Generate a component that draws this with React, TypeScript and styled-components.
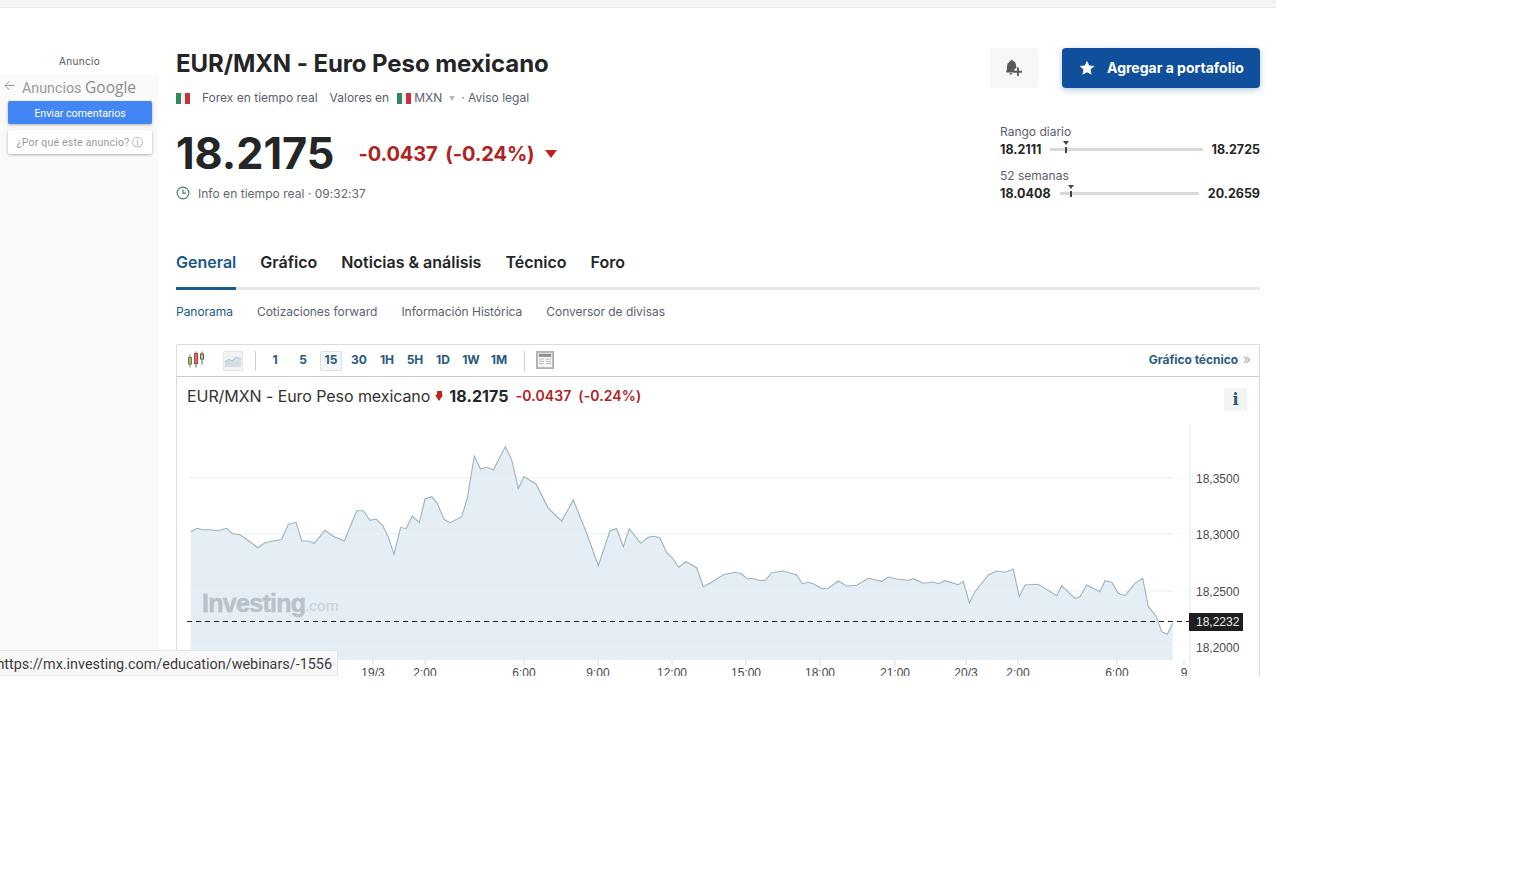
import React from "react";
import styled, { createGlobalStyle } from "styled-components";

const GlobalStyle = createGlobalStyle`
html, body {
    margin: 0;
    padding: 0;
    background: #fff;
    font-family: "Inter", "Liberation Sans", sans-serif;
    color: #232526;
}
`;

const chartPoints = "190.7,531.7 196.7,528.3 203,529.7 210,529.7 218,530.7 226.7,528.3 232.7,533.7 240,534.7 250,541.7 257.7,547.7 265,542.7 273.3,541 281.7,539.3 288.3,524.3 296,522.3 301.7,541 308.3,541 314.3,543.3 325,530.3 333.3,536.3 344.3,541 356.7,510.7 363.3,510.7 370,520.3 376,519 382.7,525.3 388.3,537.3 394,554.3 400.7,527.3 406,528.7 412.3,516 419.3,522.7 425,499 431.7,496.7 437.3,503.3 444,519.3 450,522.7 461.7,516.7 467.3,498.3 474.3,456 480.7,469.3 486.7,467 493.3,470 505.3,446.7 511.7,460 518.3,488.3 524,476.7 536,484 548.3,508.3 561.7,521 573.3,500 586.7,533.3 598.3,565.7 610,530.7 616.7,528.7 623.3,546.7 629.3,528.7 640.7,543.3 648.3,537.3 655,536.3 660,538.3 666.7,552.7 672.7,558.3 678.7,567.3 686,561.7 696.7,567.7 703.3,586.7 711.7,582.3 723.3,574.7 735,572.3 741.7,574 746.7,578.3 753.3,578.7 761.7,580.7 765.7,580 771.7,572.7 783.3,571 796.7,575 802.3,583.7 808.3,582.3 813.3,583.7 821.7,588.7 828.3,588.3 838.3,581 846.7,586 856.7,585.3 868.3,578.3 881.7,581.3 888.3,577 896.7,579 908.3,580.3 913.3,578.7 923.3,583.3 933.3,582 938.3,583.7 945,580.7 958.3,584.7 963.3,581.3 969.3,602.7 975,591.7 988.3,575 996.7,571 1005,572.3 1013.3,569.3 1019.3,596.7 1025,585 1038.3,584.3 1056.7,595.7 1061.7,585.7 1075,598.3 1080,596.7 1086.7,585 1100,591.7 1105,580.7 1111.7,582.3 1118.3,593.3 1125,595.7 1135,583.3 1142.7,578.3 1148.3,606.7 1156,616 1161.7,631.7 1167.3,634.3 1172.7,623.3";

const timeLabels = [
    { x: 373, label: "19/3" },
    { x: 425, label: "2:00" },
    { x: 524, label: "6:00" },
    { x: 598, label: "9:00" },
    { x: 672, label: "12:00" },
    { x: 746, label: "15:00" },
    { x: 820, label: "18:00" },
    { x: 895, label: "21:00" },
    { x: 966, label: "20/3" },
    { x: 1018, label: "2:00" },
    { x: 1117, label: "6:00" },
    { x: 1184, label: "9" },
];

const priceLabels = [
    { y: 478, label: "18,3500" },
    { y: 534, label: "18,3000" },
    { y: 591, label: "18,2500" },
    { y: 647, label: "18,2000" },
];

const periods = ["1", "5", "15", "30", "1H", "5H", "1D", "1W", "1M"];

function Flag() {
    return (
        <svg width="14" height="11" viewBox="0 0 14 11">
            <rect width="5" height="11" fill="#2f8a5f" />
            <rect x="5" width="4" height="11" fill="#f4eeee" />
            <rect x="9" width="5" height="11" fill="#c8323f" />
        </svg>
    );
}

function BackArrow() {
    return (
        <svg width="11" height="11" viewBox="0 0 11 11" fill="none" stroke="#9a9a9a" strokeWidth="1">
            <path d="M10.5 5.5H1M5.5 1L1 5.5 5.5 10" />
        </svg>
    );
}

function ClockIcon() {
    return (
        <svg width="14" height="14" viewBox="0 0 14 14" fill="none" stroke="#4d7a70" strokeWidth="1.2">
            <circle cx="7" cy="7" r="5.8" />
            <path d="M7 3.6V7.2H10" />
        </svg>
    );
}

function BellPlusIcon() {
    return (
        <svg width="18" height="18" viewBox="0 0 18 18" fill="#5a5a5a">
            <path d="M5.8.8c.9-.2 1.6.3 1.9 1 1.8.3 2.8 1.6 3.1 3.3.2 1.4.3 2.7.8 3.6l-2.2 1.6v3.2H1.2c-.4-.8.3-1.5.6-2.5.4-1.2.2-2.7.3-4.2.1-1.7.9-3 2.2-3.8 0-.6.6-1.1 1.5-1.2z" />
            <path d="M4.2 14.3h3.4c-.2.9-.9 1.4-1.7 1.4s-1.5-.5-1.7-1.4z" />
            <path d="M12 8.6h1.9v3.2H17v1.9h-3.1v3.2H12v-3.2H8.9v-1.9H12z" />
        </svg>
    );
}

function StarIcon() {
    return (
        <svg width="16" height="16" viewBox="0 0 16 16" fill="#fff">
            <path d="M8 .7l2.2 4.8 5.2.6-3.9 3.5 1.1 5.2L8 12.2l-4.6 2.6 1.1-5.2L.6 6.1l5.2-.6z" />
        </svg>
    );
}

function CandlesIcon() {
    return (
        <svg width="18" height="17" viewBox="0 0 18 17" fill="none" strokeWidth="1">
            <path d="M3 3.5v13" stroke="#5a8a5a" />
            <rect x="1.5" y="6.5" width="3" height="6.5" fill="#e0a070" stroke="#5a8a5a" />
            <path d="M9 .5v16" stroke="#555" />
            <rect x="7.5" y="2.5" width="3" height="10" fill="#e0687a" stroke="#a8463f" />
            <path d="M15 .5v13" stroke="#4f6f4f" />
            <rect x="13.5" y="3" width="3" height="5" fill="#e6c090" stroke="#6a5a3a" />
        </svg>
    );
}

function AreaIcon() {
    return (
        <svg width="16" height="12" viewBox="0 0 16 12">
            <path d="M0 7l4-3 3 2 4-4 5 2v8H0z" fill="#d4dde5" />
            <path d="M0 7l4-3 3 2 4-4 5 2" fill="none" stroke="#b4c0cb" />
        </svg>
    );
}

function TableIcon() {
    return (
        <svg width="18" height="18" viewBox="0 0 20 20" fill="none">
            <rect x="1" y="1" width="18" height="18" fill="#f6f6f6" stroke="#b0b0b0" strokeWidth="2" />
            <rect x="3" y="3" width="14" height="3.5" fill="#8e8e8e" />
            <path d="M3 9h6M3 11.5h6M3 14h6M11 9h6M11 11.5h6M11 14h6" stroke="#b8b8b8" />
        </svg>
    );
}

function PriceChart() {
    const top = 424;
    const bottom = 676;
    return (
        <ChartSvg viewBox={`177 ${top} 1082 ${bottom - top}`}>
            {priceLabels.map((p) => (
                <line key={p.y} x1="190" x2="1190" y1={p.y} y2={p.y} stroke="#f8f9f9" />
            ))}
            <polygon points={`190.7,660 ${chartPoints} 1172.7,660`} fill="#e5eef5" />
            {priceLabels.map((p) => (
                <line key={p.y} x1="190" x2="1172" y1={p.y} y2={p.y} stroke="#e9f1f6" />
            ))}
            <polyline points={chartPoints} fill="none" stroke="#9bb3bf" strokeWidth="1.1" />
            <AxisLine x1="1190" x2="1190" y1="424" y2="676" />
            <line x1="187" x2="1189" y1="621.5" y2="621.5" stroke="#222" strokeDasharray="5 4" />
            <Watermark x="202" y="612">Investing</Watermark>
            <WatermarkSuffix x="305" y="611">.com</WatermarkSuffix>
            {timeLabels.map((t) => (
                <g key={t.label + t.x}>
                    <line x1={t.x} x2={t.x} y1="660" y2="665" stroke="#d8dbdd" />
                    <AxisText x={t.x} y="677" textAnchor="middle">{t.label}</AxisText>
                </g>
            ))}
            {priceLabels.map((p) => (
                <AxisText key={p.y} x="1196" y={p.y + 4.5}>{p.label}</AxisText>
            ))}
        </ChartSvg>
    );
}

export default function App() {
    return (
        <Page>
            <GlobalStyle />
            <TopStrip />
            <Columns>
                <AdColumn>
                    <AdLabel>Anuncio</AdLabel>
                    <AdPanel>
                        <AdHeader>
                            <AdBack><BackArrow /></AdBack>
                            <AdTitle>Anuncios <b>Google</b></AdTitle>
                        </AdHeader>
                        <AdPrimary>Enviar comentarios</AdPrimary>
                        <AdSecondary>¿Por qué este anuncio? ⓘ</AdSecondary>
                    </AdPanel>
                </AdColumn>
                <Main>
                    <HeaderRow>
                        <div>
                            <Title>EUR/MXN - Euro Peso mexicano</Title>
                            <MetaRow>
                                <Flag />
                                <MetaText $left={12}>Forex en tiempo real</MetaText>
                                <MetaText $left={12}>Valores en</MetaText>
                                <MetaFlag><Flag /></MetaFlag>
                                <MetaText $left={3}>MXN</MetaText>
                                <Caret />
                                <MetaText $left={6}>· Aviso legal</MetaText>
                            </MetaRow>
                            <PriceRow>
                                <Price>18.2175</Price>
                                <Change>-0.0437 (-0.24%)</Change>
                                <DownTriangle />
                            </PriceRow>
                            <TimeRow>
                                <ClockIcon />
                                <span>Info en tiempo real · 09:32:37</span>
                            </TimeRow>
                        </div>
                        <Aside>
                            <Actions>
                                <BellButton><BellPlusIcon /></BellButton>
                                <AddButton><StarIcon /><span>Agregar a portafolio</span></AddButton>
                            </Actions>
                            <Ranges>
                                <Range>
                                    <RangeTitle>Rango diario</RangeTitle>
                                    <RangeRow>
                                        <b>18.2111</b>
                                        <RangeTrack>
                                            <RangeMark $left={16} />
                                        </RangeTrack>
                                        <b>18.2725</b>
                                    </RangeRow>
                                </Range>
                                <Range>
                                    <RangeTitle>52 semanas</RangeTitle>
                                    <RangeRow>
                                        <b>18.0408</b>
                                        <RangeTrack>
                                            <RangeMark $left={11} />
                                        </RangeTrack>
                                        <b>20.2659</b>
                                    </RangeRow>
                                </Range>
                            </Ranges>
                        </Aside>
                    </HeaderRow>
                    <Tabs>
                        <Tab $active>General</Tab>
                        <Tab>Gráfico</Tab>
                        <Tab>Noticias &amp; análisis</Tab>
                        <Tab>Técnico</Tab>
                        <Tab>Foro</Tab>
                    </Tabs>
                    <SubTabs>
                        <SubTab $active>Panorama</SubTab>
                        <SubTab>Cotizaciones forward</SubTab>
                        <SubTab>Información Histórica</SubTab>
                        <SubTab>Conversor de divisas</SubTab>
                    </SubTabs>
                    <ChartCard>
                        <Toolbar>
                            <ToolIcon><CandlesIcon /></ToolIcon>
                            <ToolIcon $boxed><AreaIcon /></ToolIcon>
                            <ToolDivider />
                            <Periods>
                                {periods.map((p) => (
                                    <Period key={p} $active={p === "15"}>{p}</Period>
                                ))}
                            </Periods>
                            <ToolDivider />
                            <ToolIcon><TableIcon /></ToolIcon>
                            <TechLink>Gráfico técnico <span>»</span></TechLink>
                        </Toolbar>
                        <ChartHead>
                            <ChartName>EUR/MXN - Euro Peso mexicano</ChartName>
                            <ChartArrow />
                            <ChartPrice>18.2175</ChartPrice>
                            <ChartChange>-0.0437</ChartChange>
                            <ChartChange>(-0.24%)</ChartChange>
                            <InfoButton>i</InfoButton>
                        </ChartHead>
                        <ChartBody>
                            <PriceChart />
                            <PriceTag>18,2232</PriceTag>
                        </ChartBody>
                    </ChartCard>
                </Main>
            </Columns>
            <StatusBubble><span>https://mx.investing.com/education/webinars/-1556</span></StatusBubble>
        </Page>
    );
}

const Page = styled.div`
position: relative;
width: 1537px;
height: 896px;
overflow: hidden;
background: #fff;
`;

const TopStrip = styled.div`
width: 1276px;
height: 8px;
background: #f4f4f4;
border-bottom: 1px solid #ebebeb;
box-sizing: border-box;
`;

const Columns = styled.div`
display: flex;
width: 1276px;
`;

const AdColumn = styled.div`
width: 158px;
flex: none;
margin-right: 18px;
`;

const AdLabel = styled.div`
margin-top: 47px;
height: 20px;
padding-left: 1px;
text-align: center;
font-size: 10px;
line-height: 13px;
color: #555;
letter-spacing: 0.3px;
`;

const AdPanel = styled.div`
height: 575px;
background: #fafafa;
box-sizing: border-box;
`;

const AdHeader = styled.div`
display: flex;
align-items: center;
height: 26px;
padding-left: 4px;
`;

const AdBack = styled.span`
display: flex;
width: 18px;
margin-top: -6px;
`;

const AdTitle = styled.span`
margin-top: -2px;
font-family: "Roboto", sans-serif;
font-size: 14.3px;
color: #9a9a9a;

b {
    font-family: "Open Sans", sans-serif;
    font-weight: 500;
    font-size: 15.5px;
    color: #8c8c8c;
}
`;

const AdPrimary = styled.div`
margin: 0 6px 0 8px;
height: 23px;
background: #4285f4;
border-radius: 2px;
box-shadow: 0 1px 3px rgba(0, 0, 0, 0.3);
color: #fff;
font-size: 10.7px;
line-height: 25px;
text-align: center;
font-family: "Roboto", sans-serif;
`;

const AdSecondary = styled.div`
margin: 6px 6px 0 8px;
height: 24px;
background: #fff;
border-radius: 2px;
box-shadow: 0 1px 3px rgba(0, 0, 0, 0.3);
color: #9a9a9a;
font-size: 10.5px;
line-height: 26px;
text-align: center;
font-family: "Roboto", sans-serif;
letter-spacing: 0.2px;
`;

const Main = styled.div`
width: 1084px;
flex: none;
`;

const HeaderRow = styled.div`
display: flex;
justify-content: space-between;
height: 230px;
padding-top: 40px;
box-sizing: border-box;
`;

const Title = styled.h1`
margin: 0;
font-size: 24px;
line-height: 32px;
font-weight: 700;
letter-spacing: -0.08px;
color: #232526;
`;

const MetaRow = styled.div`
display: flex;
align-items: center;
height: 20px;
margin-top: 8px;
`;

const MetaText = styled.span<{ $left: number }>`
margin-left: ${(p) => p.$left}px;
font-size: 12px;
line-height: 20px;
color: #5b616e;
`;

const MetaFlag = styled.span`
display: flex;
margin-left: 8px;
`;

const Caret = styled.span`
width: 0;
height: 0;
margin: 1px 0 0 7px;
border-left: 3.5px solid transparent;
border-right: 3.5px solid transparent;
border-top: 5px solid #bbb;
`;

const PriceRow = styled.div`
display: flex;
align-items: center;
height: 60px;
margin-top: 15px;
`;

const Price = styled.div`
font-size: 43.2px;
font-weight: 700;
line-height: 60px;
color: #232526;
`;

const Change = styled.div`
margin: 2px 0 0 24px;
font-size: 20px;
font-weight: 700;
word-spacing: 3px;
letter-spacing: -0.1px;
color: #b0231f;
`;

const DownTriangle = styled.span`
width: 0;
height: 0;
margin: 1px 0 0 10px;
border-left: 6.5px solid transparent;
border-right: 6.5px solid transparent;
border-top: 8px solid #c4201b;
`;

const TimeRow = styled.div`
display: flex;
align-items: center;
gap: 8px;
height: 20px;
margin-top: 0;
font-size: 12px;
letter-spacing: 0.03px;
color: #62676f;
`;

const Aside = styled.div`
width: 270px;
`;

const Actions = styled.div`
display: flex;
justify-content: flex-end;
align-items: center;
gap: 24px;
`;

const BellButton = styled.div`
display: flex;
align-items: center;
justify-content: center;
width: 48px;
height: 40px;
background: #f7f7f7;
border-radius: 3px;
`;

const AddButton = styled.div`
display: flex;
align-items: center;
gap: 12px;
width: 198px;
height: 40px;
padding-left: 17px;
box-sizing: border-box;
background: #0f4f9c;
border-radius: 4px;
box-shadow: 0 2px 6px rgba(15, 79, 156, 0.3);
color: #fff;
font-size: 14px;
font-weight: 700;

span {
    margin-top: -2px;
}
`;

const Ranges = styled.div`
margin-top: 36px;
padding-left: 10px;
display: flex;
flex-direction: column;
gap: 8px;
`;

const Range = styled.div`
height: 36px;
`;

const RangeTitle = styled.div`
font-size: 12px;
line-height: 15px;
color: #5b616e;
`;

const RangeRow = styled.div`
display: flex;
align-items: center;
gap: 9px;
height: 20px;
font-size: 12.5px;
color: #232526;

b {
    font-weight: 700;
}
`;

const RangeTrack = styled.div`
position: relative;
flex: 1;
height: 3px;
background: #d9d9d9;
`;

const RangeMark = styled.span<{ $left: number }>`
position: absolute;
left: ${(p) => p.$left}px;
top: -7px;
margin-left: -3px;
width: 0;
height: 0;
border-left: 3px solid transparent;
border-right: 3px solid transparent;
border-top: 4px solid #444;

&::after {
    content: "";
    position: absolute;
    left: -1px;
    top: 2px;
    width: 2px;
    height: 6px;
    background: #444;
}
`;

const Tabs = styled.div`
display: flex;
gap: 24px;
height: 52px;
border-bottom: 3px solid #e6e9eb;
box-sizing: border-box;
`;

const Tab = styled.div<{ $active?: boolean }>`
height: 52px;
box-sizing: border-box;
padding-top: 14px;
font-size: 16px;
line-height: 20px;
font-weight: 600;
color: ${(p) => (p.$active ? "#1a5a86" : "#232526")};
border-bottom: 3px solid ${(p) => (p.$active ? "#1a5a86" : "transparent")};
`;

const SubTabs = styled.div`
display: flex;
gap: 24px;
height: 54px;
padding-top: 12px;
box-sizing: border-box;
`;

const SubTab = styled.div<{ $active?: boolean }>`
font-size: 12px;
line-height: 20px;
letter-spacing: -0.03px;
color: ${(p) => (p.$active ? "#1a5a86" : "#5b616e")};
`;

const ChartCard = styled.div`
height: 332px;
border: 1px solid #d9dcde;
border-bottom: none;
border-radius: 2px 2px 0 0;
box-sizing: border-box;
overflow: hidden;
`;

const Toolbar = styled.div`
display: flex;
align-items: center;
height: 31px;
padding: 0 8px 0 10px;
border-bottom: 1px solid #c6c9cc;
`;

const ToolIcon = styled.div<{ $boxed?: boolean }>`
display: flex;
align-items: center;
justify-content: center;
flex: none;
width: 20px;
height: 20px;
margin-right: ${(p) => (p.$boxed ? "0" : "17px")};
background: ${(p) => (p.$boxed ? "#f0f2f4" : "transparent")};
border: ${(p) => (p.$boxed ? "1px solid #e2e5e7" : "none")};
box-sizing: border-box;
margin-left: ${(p) => (p.$boxed ? "0" : "-1px")};
margin-top: ${(p) => (p.$boxed ? "0" : "-2px")};
`;

const ToolDivider = styled.div`
width: 1px;
height: 20px;
margin: 0 11px 0 12px;
background: #cfd2d4;
`;

const Periods = styled.div`
display: flex;
gap: 6px;
margin: 0 2px 0 -3px;
`;

const Period = styled.div<{ $active?: boolean }>`
width: 22px;
height: 20px;
box-sizing: border-box;
text-align: center;
font-size: 12px;
line-height: 16px;
font-weight: 700;
color: #2a5a7c;
background: ${(p) => (p.$active ? "#f3f5f7" : "transparent")};
border: 1px solid ${(p) => (p.$active ? "#dcdfe2" : "transparent")};
border-radius: 2px;
`;

const TechLink = styled.div`
margin: -4px 0 0 auto;
font-size: 12px;
font-weight: 700;
letter-spacing: -0.03px;
color: #2a5a7c;

span {
    color: #a9b0b6;
    font-size: 14px;
    font-weight: 400;
    margin-left: 2px;
}
`;

const ChartHead = styled.div`
display: flex;
align-items: center;
height: 47px;
padding: 0 12px 0 10px;
box-sizing: border-box;
`;

const ChartName = styled.span`
margin-top: -10px;
font-size: 16px;
letter-spacing: -0.07px;
color: #333;
font-weight: 400;
`;

const ChartArrow = styled.span`
position: relative;
width: 0;
height: 0;
margin: -5px 0 0 5px;
border-left: 4.5px solid transparent;
border-right: 4.5px solid transparent;
border-top: 6px solid #c4201b;

&::before {
    content: "";
    position: absolute;
    left: -2.5px;
    top: -10px;
    width: 5px;
    height: 5px;
    background: #c4201b;
}
`;

const ChartPrice = styled.span`
margin: -10px 7px 0 6px;
font-size: 16px;
font-weight: 700;
letter-spacing: 0.1px;
color: #232526;
`;

const ChartChange = styled.span`
margin: -10px 7px 0 0;
font-size: 14px;
font-weight: 600;
letter-spacing: 0.1px;
color: #b0231f;
`;

const InfoButton = styled.div`
margin: -2px 0 0 auto;
width: 23px;
height: 23px;
background: #f2f4f5;
border-radius: 2px;
text-align: center;
font-family: "DejaVu Serif", serif;
font-size: 16px;
font-weight: 700;
line-height: 23px;
color: #2a5a7c;
`;

const ChartBody = styled.div`
position: relative;
height: 253px;
`;

const ChartSvg = styled.svg`
display: block;
width: 1082px;
height: 252px;
`;

const AxisLine = styled.line`
stroke: #e3e5e7;
`;

const AxisText = styled.text`
font-family: "Liberation Sans", sans-serif;
font-size: 12px;
fill: #4a4a4a;
`;

const Watermark = styled.text`
font-family: "Liberation Sans", sans-serif;
font-size: 25px;
font-weight: 700;
letter-spacing: -0.7px;
fill: #b9c1c9;
stroke: #b9c1c9;
stroke-width: 0.5px;
`;

const WatermarkSuffix = styled.text`
font-family: "Liberation Sans", sans-serif;
font-size: 15.5px;
fill: #c9d0d6;
`;

const PriceTag = styled.div`
position: absolute;
left: 1012px;
top: 189px;
width: 54px;
height: 18px;
padding-left: 7px;
box-sizing: border-box;
background: #1e1e1e;
color: #eee;
font-family: "Liberation Sans", sans-serif;
font-size: 12px;
line-height: 18px;
`;

const StatusBubble = styled.div`
position: absolute;
left: 0;
top: 650px;
display: flex;
justify-content: flex-end;
width: 338px;
height: 26px;
padding-right: 5px;
box-sizing: border-box;
background: #f8f8f8;
border: 1px solid #e6e6e6;
border-left: none;
font-family: "Roboto", sans-serif;
font-size: 14.4px;
line-height: 28px;
color: #3c3c3c;
white-space: nowrap;
overflow: hidden;

span {
    flex: none;
}
`;
